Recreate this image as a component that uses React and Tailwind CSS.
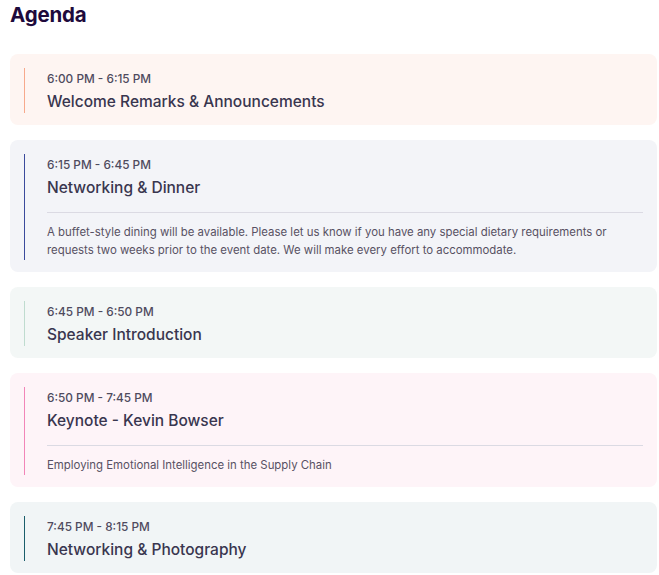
import React from "react";

const items = [
  {
    time: "6:00 PM - 6:15 PM",
    title: "Welcome Remarks & Announcements",
    bg: "bg-[#fef5f2]",
    border: "border-[#f7a98c]",
  },
  {
    time: "6:15 PM - 6:45 PM",
    title: "Networking & Dinner",
    desc: "A buffet-style dining will be available. Please let us know if you have any special dietary requirements or requests two weeks prior to the event date. We will make every effort to accommodate.",
    bg: "bg-[#f3f4f8]",
    border: "border-[#3a4a9c]",
  },
  {
    time: "6:45 PM - 6:50 PM",
    title: "Speaker Introduction",
    bg: "bg-[#f3f7f6]",
    border: "border-[#bfdccf]",
  },
  {
    time: "6:50 PM - 7:45 PM",
    title: "Keynote - Kevin Bowser",
    desc: "Employing Emotional Intelligence in the Supply Chain",
    bg: "bg-[#fef4f8]",
    border: "border-[#f285b8]",
  },
  {
    time: "7:45 PM - 8:15 PM",
    title: "Networking & Photography",
    bg: "bg-[#f1f5f6]",
    border: "border-[#1b5e6b]",
  },
];

export default function App() {
  return (
    <div
      className="bg-white pl-[10px] pr-[2px] pt-[1px]"
      style={{ fontFamily: "Inter, 'Liberation Sans', sans-serif" }}
    >
      <h2 className="text-[20.5px] leading-[28px] font-bold text-[#1e0a3c] tracking-[-0.2px]">
        Agenda
      </h2>
      <div className="mt-[25px] flex flex-col gap-[15px]">
        {items.map((it, i) => (
          <div key={i} className={`${it.bg} rounded-lg px-[14px] pt-[14px] pb-[12px]`}>
            <div className={`border-l ${it.border} pl-[22px] pr-[0px]`}>
              <div className="text-[11.8px] leading-[18px] pt-[2px] text-[#4f4b5e] font-medium">
                {it.time}
              </div>
              <div className="text-[15.5px] leading-[22px] mt-[3px] text-[#39364f] font-medium">
                {it.title}
              </div>
              {it.desc && (
                <div className="mt-[13px] border-t border-[#dbdae3] pt-[10px] pb-[1px] text-[11.4px] leading-[18px] text-[#585163]">
                  {it.desc}
                </div>
              )}
            </div>
          </div>
        ))}
      </div>
    </div>
  );
}
